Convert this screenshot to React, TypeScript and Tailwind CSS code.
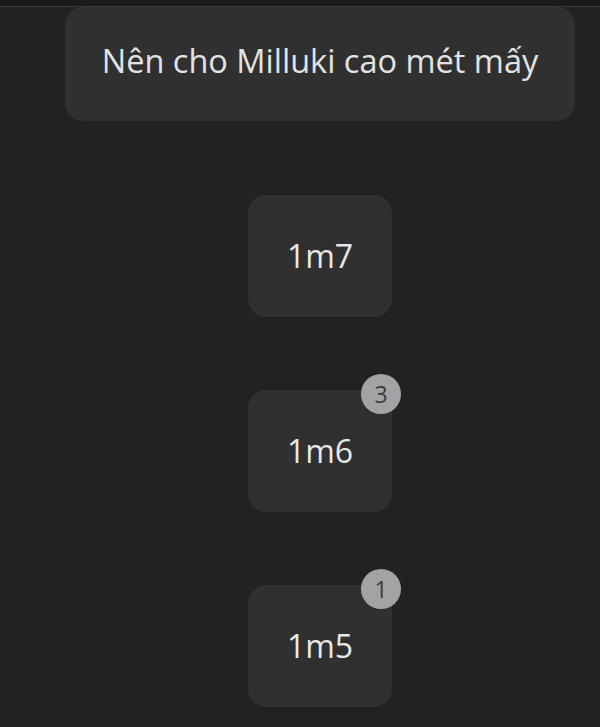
import React from "react";

type Option = { label: string; votes?: number };

const options: Option[] = [
    { label: "1m7" },
    { label: "1m6", votes: 3 },
    { label: "1m5", votes: 1 },
];

function OptionCard({ label, votes }: Option) {
    return (
        <div className="relative w-[144px] h-[122px] rounded-[18px] bg-[#303030] flex items-center justify-center">
            <span className="text-[32px] leading-none text-[#e8e8e8]">{label}</span>
            {votes !== undefined && (
                <span className="absolute -top-[16px] -right-[9px] w-[40px] h-[40px] rounded-full bg-[#a3a3a3] flex items-center justify-center text-[23px] leading-none text-[#3c3c3c]">
                    {votes}
                </span>
            )}
        </div>
    );
}

export default function App() {
    return (
        <div
            className="w-[600px] h-[727px] overflow-hidden bg-[#222222]"
            style={{ fontFamily: '"Open Sans", "Noto Sans", sans-serif' }}
        >
            <div className="h-[7px] bg-[#1a1a1a] border-b border-[#3a3a3a]" />

            <div className="ml-[65px] w-[510px] h-[114px] rounded-[18px] bg-[#303030] flex items-center justify-center">
                <p className="text-[32.5px] leading-none text-[#e3e3e3] -mt-[5px]">Nên cho Milluki cao mét mấy</p>
            </div>

            <div className="flex flex-col items-center gap-[73px] pt-[74px] pl-[40px]">
                {options.map((o) => (
                    <OptionCard key={o.label} {...o} />
                ))}
            </div>
        </div>
    );
}
